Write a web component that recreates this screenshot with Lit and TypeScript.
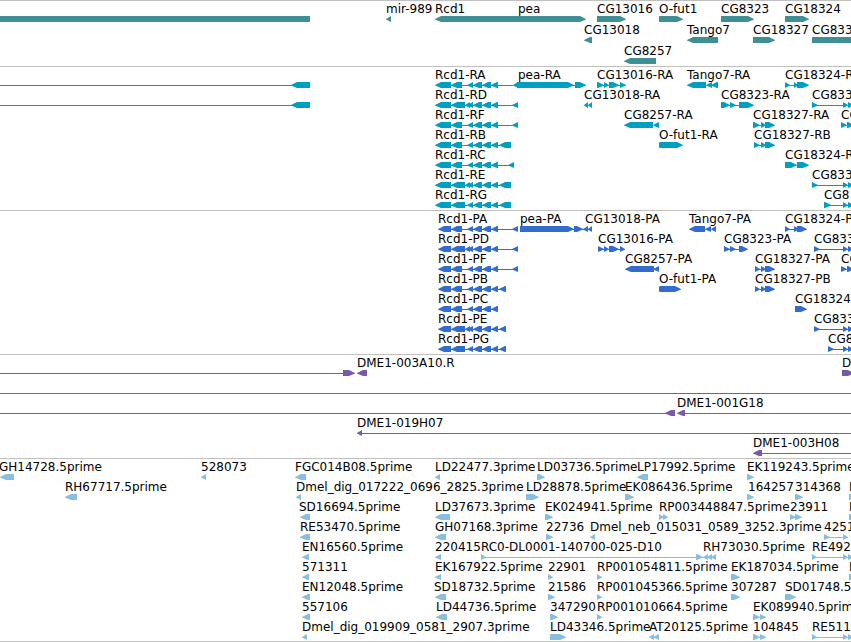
import { LitElement, html, svg, css } from "lit";
import { customElement, property } from "lit/decorators.js";

type Label = [number, string];
// Shapes are written as kind + start + ":" + end, where the kind is
// "<" or ">" for an exon with its strand, "=" for a plain bar, "-" for an intron line.
type Row = { labels: Label[]; shapes: string };
type Track = { name: string; rows: Row[] };

const row = (shapes: string, ...labels: Label[]): Row => ({ shapes, labels });

// Exons shared by the Rcd1 isoforms.
const MID = "-451:498 <473:482 <482:491 <491:498 <467:473";
const SHORT = `<451:462 ${MID}`;
const LONG = `<451:465 ${MID}`;
const FULL = `<451:465 <465:470 ${MID}`;
const FAR = "-497:513 <512:518";
const EDGE = ">843:848 >848:854";

const tracks: Track[] = [
  {
    name: "genes",
    rows: [
      row("=0:310 <386:391 <435:514 >513:586 >597:626 >659:683 >721:754 >785:809",
        [386, "mir-989"], [435, "Rcd1"], [518, "pea"], [597, "CG13016"], [659, "O-fut1"], [721, "CG8323"], [785, "CG18324"]),
      row("<584:592 <687:718 >753:775 =812:9999",
        [584, "CG13018"], [687, "Tango7"], [753, "CG18327"], [812, "CG833"]),
      row("<624:656", [624, "CG8257"]),
    ],
  },
  {
    name: "transcripts",
    rows: [
      row(`-0:292 <291:310 <435:451 ${SHORT} -497:513 <513:518 >517:574 -570:586 >575:586 -597:626 >597:604 >604:609 >609:619 >620:626 <687:706 <706:712 <711:718 -785:798 >785:790 >794:798 >797:809`,
        [435, "Rcd1-RA"], [518, "pea-RA"], [597, "CG13016-RA"], [687, "Tango7-RA"], [785, "CG18324-RA"]),
      row(`-0:292 <291:310 <435:451 ${FULL} ${FAR} <584:588 <588:592 -721:745 >721:730 >730:736 >739:754 -812:848 >812:818 ${EDGE}`,
        [435, "Rcd1-RD"], [584, "CG13018-RA"], [721, "CG8323-RA"], [812, "CG833"]),
      row(`<435:451 ${SHORT} ${FAR} <624:653 <653:659 -753:766 >753:760 >761:766 >765:775 >841:847 >847:854`,
        [435, "Rcd1-RF"], [624, "CG8257-RA"], [753, "CG18327-RA"], [841, "CG"]),
      row(`<435:451 ${SHORT} -498:502 <499:511 >659:663 >660:683 -754:766 >754:760 >761:766 >765:775`,
        [435, "Rcd1-RB"], [659, "O-fut1-RA"], [754, "CG18327-RB"]),
      row(`<435:451 ${SHORT} -498:509 <508:514 >785:797 >797:809`,
        [435, "Rcd1-RC"], [785, "CG18324-RB"]),
      row(`<435:451 ${FULL} -498:502 <499:511 -812:848 >812:818 ${EDGE}`,
        [435, "Rcd1-RE"], [812, "CG833"]),
      row(`<435:451 ${LONG} -498:502 <499:511 -824:848 >824:831 ${EDGE}`,
        [435, "Rcd1-RG"], [824, "CG8"]),
    ],
  },
  {
    name: "proteins",
    rows: [
      row(`<438:451 ${SHORT} ${FAR} >520:574 -570:590 >574:583 <583:588 <588:592 <689:705 <705:711 <711:716 -785:798 >785:790 >794:799 >797:807`,
        [438, "Rcd1-PA"], [520, "pea-PA"], [585, "CG13018-PA"], [689, "Tango7-PA"], [785, "CG18324-PA"]),
      row(`<438:451 ${FULL} ${FAR} -598:625 >598:604 >604:609 >609:619 >620:625 -724:745 >724:730 >730:736 >739:748 -814:848 >814:820 ${EDGE}`,
        [438, "Rcd1-PD"], [598, "CG13016-PA"], [724, "CG8323-PA"], [814, "CG833"]),
      row(`<438:451 ${SHORT} ${FAR} <625:654 <653:659 -755:766 >755:760 >761:766 >765:775 >841:847 >847:854`,
        [438, "Rcd1-PF"], [625, "CG8257-PA"], [755, "CG18327-PA"], [841, "CG"]),
      row(`<438:451 ${SHORT} -498:502 <499:506 >659:663 >660:681 -755:766 >755:760 >761:766 >765:775`,
        [438, "Rcd1-PB"], [659, "O-fut1-PA"], [755, "CG18327-PB"]),
      row(`<438:451 ${SHORT} >795:807`, [438, "Rcd1-PC"], [795, "CG18324"]),
      row(`<438:451 ${FULL} -498:502 <499:506 -814:848 >814:820 ${EDGE}`,
        [438, "Rcd1-PE"], [814, "CG833"]),
      row(`<438:451 ${LONG} -498:502 <499:506 -828:848 >828:834 ${EDGE}`,
        [438, "Rcd1-PG"], [828, "CG8"]),
    ],
  },
  {
    name: "clones",
    rows: [
      row("-0:345 >343:355 <357:367 >842:854", [357, "DME1-003A10.R"], [842, "D"]),
      row("-0:9999"),
      row("-0:670 <665:675 <677:685 -685:9999", [677, "DME1-001G18"]),
      row("<357:362 -362:9999", [357, "DME1-019H07"]),
      row("<753:762 -762:9999", [753, "DME1-003H08"]),
    ],
  },
  {
    name: "ests",
    rows: [
      row("<0:14 <201:206 <295:306 <435:440 >537:545 <637:648 >747:754",
        [-1, "GH14728.5prime"], [201, "528073"], [295, "FGC014B08.5prime"], [435, "LD22477.3prime"], [537, "LD03736.5prime"], [637, "LP17992.5prime"], [747, "EK119243.5prime"]),
      row("<65:77 <296:301 >526:539 >625:634 >747:754 >795:803 >849:857",
        [65, "RH67717.5prime"], [296, "Dmel_dig_017222_0696_2825.3prime"], [526, "LD28878.5prime"], [625, "EK086436.5prime"], [748, "164257"], [795, "314368"], [849, "E"]),
      row("<300:310 <435:450 >545:553 >659:664 >663:668 >790:796 >795:802 >849:857",
        [299, "SD16694.5prime"], [435, "LD37673.3prime"], [545, "EK024941.5prime"], [659, "RP003448847.5prime"], [790, "23911"], [849, "E"]),
      row("<300:310 <435:446 >546:553 <590:595 >824:830 -824:848 >843:848",
        [300, "RE53470.5prime"], [435, "GH07168.3prime"], [546, "22736"], [590, "Dmel_neb_015031_0589_3252.3prime"], [824, "4251"]),
      row(`<302:309 <435:441 >481:486 -481:716 >696:703 <703:708 <707:712 <711:716 >812:817 -812:848 ${EDGE}`,
        [302, "EN16560.5prime"], [435, "220415"], [481, "RC0-DL0001-140700-025-D10"], [703, "RH73030.5prime"], [812, "RE492"]),
      row("<302:309 <435:441 >548:553 >597:602 >731:740 >849:857",
        [302, "571311"], [435, "EK167922.5prime"], [548, "22901"], [597, "RP001054811.5prime"], [731, "EK187034.5prime"], [849, "E"]),
      row("<302:310 <435:446 >548:555 >597:602 >731:740 >785:796",
        [302, "EN12048.5prime"], [434, "SD18732.5prime"], [548, "21586"], [597, "RP001045366.5prime"], [731, "307287"], [785, "SD01748.5"]),
      row("<302:310 <436:447 >550:558 >597:602 -753:766 >753:760 >760:766",
        [302, "557106"], [436, "LD44736.5prime"], [550, "347290"], [597, "RP001010664.5prime"], [753, "EK089940.5prime"]),
      row(`<302:307 >550:566 <649:654 <653:659 -753:766 >753:760 >760:766 >812:817 -812:848 ${EDGE}`,
        [302, "Dmel_dig_019909_0581_2907.3prime"], [550, "LD43346.5prime"], [649, "AT20125.5prime"], [753, "104845"], [812, "RE511"]),
    ],
  },
];

function shape(code: string) {
  const [a, b] = code.slice(1).split(":").map(Number);
  const tip = Math.min(6, b - a);
  switch (code[0]) {
    case "-":
      return svg`<rect x=${a} y="3" width=${b - a} height="1"/>`;
    case "=":
      return svg`<rect x=${a} y="0" width=${b - a} height="6"/>`;
    case "<":
      return svg`<polygon points="${a},3 ${a + tip},0 ${b},0 ${b},6 ${a + tip},6 ${a},3.5"/>`;
    default:
      return svg`<polygon points="${b},3 ${b - tip},0 ${a},0 ${a},6 ${b - tip},6 ${b},3.5"/>`;
  }
}

@customElement("genome-track")
export class GenomeTrack extends LitElement {
  @property({ attribute: false }) rows: Row[] = [];

  static styles = css`
    :host {
      display: flex;
      flex-direction: column;
      padding: 1px 0 2px;
      border-top: 1px solid #c0c0c0;
    }
    :host(.genes) {
      color: #408f94;
      gap: 1px;
    }
    :host(.transcripts) {
      color: #009fbf;
    }
    :host(.proteins) {
      color: #326dcd;
    }
    :host(.clones) {
      color: #785aa8;
    }
    :host(.ests) {
      color: #89bedd;
      padding-bottom: 1px;
      border-bottom: 1px solid #c0c0c0;
    }
    .row {
      display: flex;
      flex-direction: column;
    }
    .labels {
      position: relative;
      height: 14px;
      color: #000;
    }
    .label {
      position: absolute;
      top: 0;
      line-height: 14px;
      white-space: nowrap;
    }
    .shapes {
      display: block;
      width: 100%;
      height: 6px;
      fill: currentColor;
    }
  `;

  render() {
    return this.rows.map(
      (r) => html`<div class="row">
        <div class="labels">
          ${r.labels.map(([x, text]) => html`<span class="label" style="left:${x}px">${text}</span>`)}
        </div>
        <svg class="shapes" aria-hidden="true">${r.shapes.split(" ").map(shape)}</svg>
      </div>`
    );
  }
}

@customElement("app-root")
export class AppRoot extends LitElement {
  static styles = css`
    :host {
      display: block;
      overflow: hidden;
      background: #fff;
      font: 12px "DejaVu Sans", sans-serif;
    }
  `;

  render() {
    return tracks.map((t) => html`<genome-track class=${t.name} .rows=${t.rows}></genome-track>`);
  }
}
